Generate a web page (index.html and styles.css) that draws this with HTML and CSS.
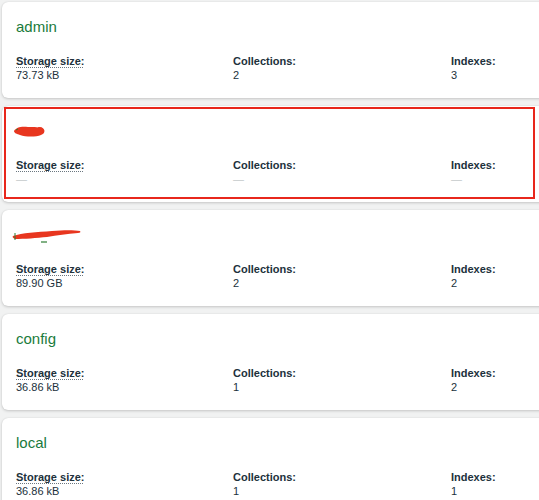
FILE: index.html
```html
<!DOCTYPE html>
<html>
<head>
<meta charset="utf-8">
<link rel="stylesheet" href="styles.css">
</head>
<body>
<div class="list">
  <div class="card">
    <div class="title">admin</div>
    <div class="stats">
      <div class="stat"><div class="label dotted">Storage size:</div><div class="value">73.73 kB</div></div>
      <div class="stat"><div class="label">Collections:</div><div class="value">2</div></div>
      <div class="stat"><div class="label">Indexes:</div><div class="value">3</div></div>
    </div>
  </div>
  <div class="card marked">
    <div class="title">
      <svg class="scribble" width="34" height="14" viewBox="0 0 34 14">
        <path d="M2 7 C4 3 10 2 16 3 C22 3 28 3 31 5 C33 7 32 10 29 11 C24 13 14 13 8 11 C5 10 2 9 2 7 Z" fill="#e8361f"/>
        <path d="M26 4 C30 3 33 6 31 9" stroke="#e8361f" stroke-width="1.5" fill="none"/>
        <path d="M4 6 L6 5" stroke="#2e7d32" stroke-width="1"/>
      </svg>
    </div>
    <div class="stats">
      <div class="stat"><div class="label dotted">Storage size:</div><div class="value empty">—</div></div>
      <div class="stat"><div class="label">Collections:</div><div class="value empty">—</div></div>
      <div class="stat"><div class="label">Indexes:</div><div class="value empty">—</div></div>
    </div>
    <div class="redbox"></div>
  </div>
  <div class="card">
    <div class="title">
      <svg class="scribble" width="70" height="16" viewBox="0 0 70 16">
        <path d="M1 9 C10 6 25 5 40 4 C52 3 62 3 68 4 C69 5 68 6 66 6 C55 7 45 8 35 10 C25 11 12 12 3 12 C1 11 0 10 1 9 Z" fill="#e8361f"/>
        <path d="M3 6 L3 13" stroke="#2e7d32" stroke-width="1"/>
        <path d="M29 15 L35 15" stroke="#2e7d32" stroke-width="1.2"/>
      </svg>
    </div>
    <div class="stats">
      <div class="stat"><div class="label dotted">Storage size:</div><div class="value">89.90 GB</div></div>
      <div class="stat"><div class="label">Collections:</div><div class="value">2</div></div>
      <div class="stat"><div class="label">Indexes:</div><div class="value">2</div></div>
    </div>
  </div>
  <div class="card">
    <div class="title">config</div>
    <div class="stats">
      <div class="stat"><div class="label dotted">Storage size:</div><div class="value">36.86 kB</div></div>
      <div class="stat"><div class="label">Collections:</div><div class="value">1</div></div>
      <div class="stat"><div class="label">Indexes:</div><div class="value">2</div></div>
    </div>
  </div>
  <div class="card">
    <div class="title">local</div>
    <div class="stats">
      <div class="stat"><div class="label dotted">Storage size:</div><div class="value">36.86 kB</div></div>
      <div class="stat"><div class="label">Collections:</div><div class="value">1</div></div>
      <div class="stat"><div class="label">Indexes:</div><div class="value">1</div></div>
    </div>
  </div>
</div>
</body>
</html>
```
FILE: styles.css
```css
html, body {
  margin: 0;
  padding: 0;
  background: #f1f2f2;
  overflow: hidden;
  font-family: "Liberation Sans", Arial, sans-serif;
  color: #21313c;
}
.list {
  display: flex;
  flex-direction: column;
  gap: 8px;
  padding: 2px 0 0 2px;
  width: 700px;
}
.card {
  position: relative;
  background: #fff;
  border-radius: 6px;
  box-shadow: 0 1px 3px rgba(0,0,0,0.18), 0 0 1px rgba(0,0,0,0.12);
  padding: 16px 14px;
}
.title {
  height: 18px;
  line-height: 18px;
  font-size: 15px;
  color: #1a7b3c;
  margin-bottom: 18px;
  display: flex;
  align-items: center;
}
.scribble {
  display: block;
  margin-left: -4px;
}
.stats {
  display: grid;
  grid-template-columns: 217px 218px 1fr;
}
.label {
  font-size: 11px;
  font-weight: bold;
  line-height: 14px;
  color: #21313c;
}
.label.dotted {
  display: inline-block;
  background-image: linear-gradient(to right, #6b7780 50%, transparent 50%);
  background-size: 2px 1px;
  background-repeat: repeat-x;
  background-position: 0 13px;
}
.stat {
  display: flex;
  flex-direction: column;
  align-items: flex-start;
}
.value {
  font-size: 11px;
  line-height: 14px;
  color: #21313c;
}
.value.empty {
  color: #c5cacc;
}
.redbox {
  position: absolute;
  left: 2px;
  top: 1px;
  width: 527px;
  height: 88px;
  border: 2px solid #e8271c;
}
```
